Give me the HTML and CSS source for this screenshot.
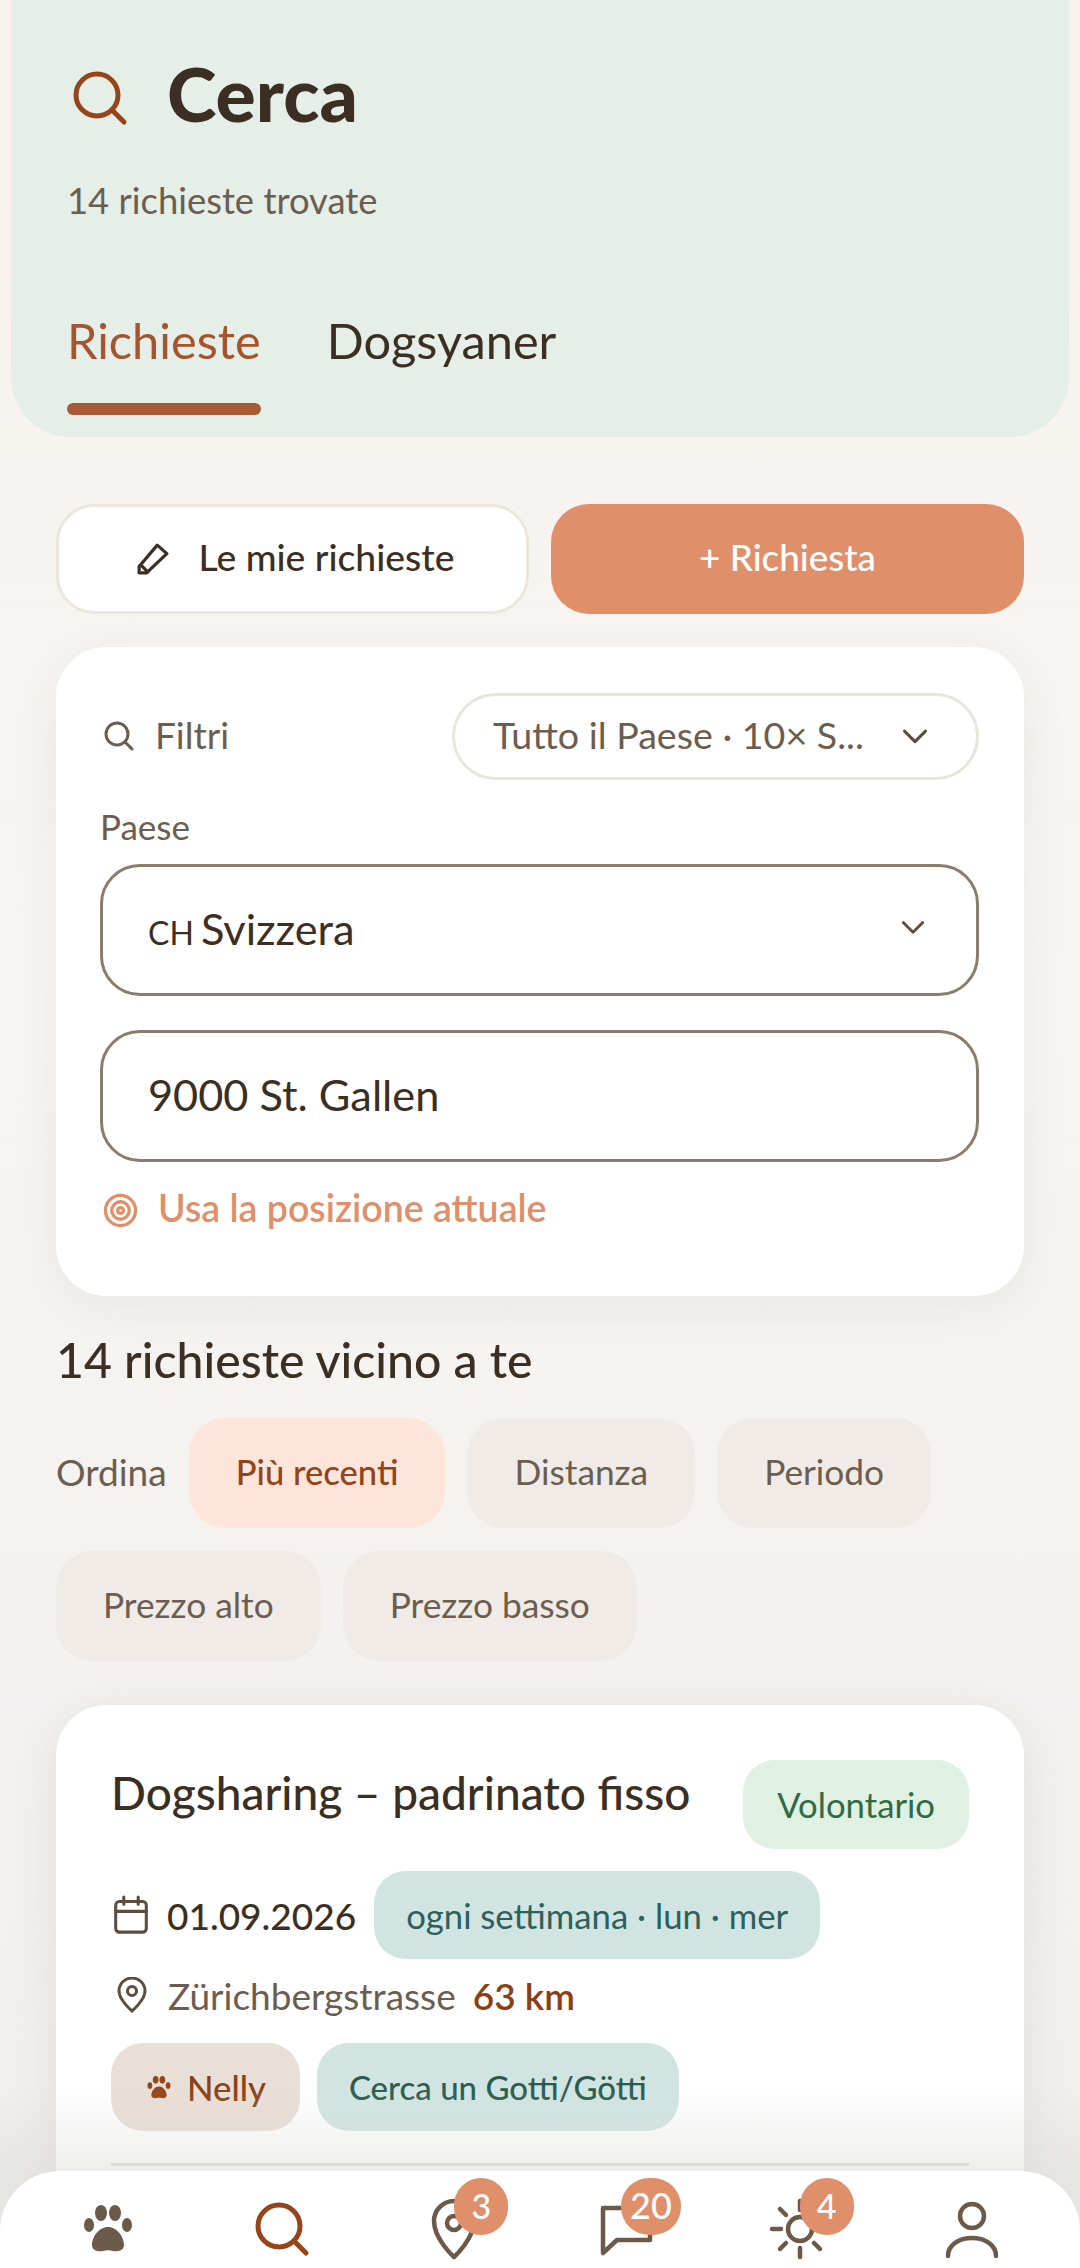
FILE: index.html
```html
<!DOCTYPE html>
<html lang="it">
<head>
<meta charset="utf-8">
<title>Cerca</title>
<link rel="stylesheet" href="styles.css">
</head>
<body>
<div class="page">
  <header class="hero">
    <div class="hero-title">
      <svg class="ic64 rust" viewBox="0 0 64 64"><circle cx="30" cy="29" r="21"/><path d="M45 44L57 56"/></svg>
      <h1>Cerca</h1>
    </div>
    <p class="hero-sub">14 richieste trovate</p>
    <div class="tabs">
      <div class="tab active">Richieste</div>
      <div class="tab">Dogsyaner</div>
    </div>
  </header>

  <main class="content">
    <div class="actions">
      <button class="btn btn-light">
        <svg class="ic-pencil" viewBox="0 0 30 30"><path d="M2 22L19 2L28 10L9 28H2Z"/><path d="M4 21L10 27"/></svg>
        Le mie richieste
      </button>
      <button class="btn btn-primary">+ Richiesta</button>
    </div>

    <section class="panel">
      <div class="filter-head">
        <div class="filter-label">
          <svg class="ic-filter" viewBox="0 0 32 32"><circle cx="14" cy="14" r="11"/><path d="M22 22l7 7"/></svg>
          Filtri
        </div>
        <div class="filter-pill">
          <span>Tutto il Paese · 10× S...</span>
          <svg class="chev" viewBox="0 0 24 24"><path d="M3 7l9 9 9-9"/></svg>
        </div>
      </div>
      <div class="field-label">Paese</div>
      <div class="field field-select">
        <span><span class="cc">CH</span> Svizzera</span>
        <svg class="chev chev-sm" viewBox="0 0 24 24"><path d="M3 7l9 9 9-9"/></svg>
      </div>
      <div class="field field-input">9000 St. Gallen</div>
      <div class="geo">
        <svg class="ic-target" viewBox="0 0 36 36"><circle cx="18" cy="18" r="15.5"/><circle cx="18" cy="18" r="9"/><circle cx="18" cy="18" r="3"/></svg>
        Usa la posizione attuale
      </div>
    </section>

    <h2 class="count">14 richieste vicino a te</h2>

    <div class="sort">
      <span class="sort-label">Ordina</span>
      <span class="chip chip-on">Più recenti</span>
      <span class="chip">Distanza</span>
      <span class="chip">Periodo</span>
      <span class="chip">Prezzo alto</span>
      <span class="chip">Prezzo basso</span>
    </div>

    <article class="card">
      <div class="card-top">
        <h3>Dogsharing – padrinato fisso</h3>
        <span class="tag tag-green">Volontario</span>
      </div>
      <div class="row-date">
        <svg class="ic-cal" viewBox="2 1 20 22"><rect x="3.5" y="4.5" width="17" height="17" rx="2"/><path d="M3.5 10h17M8 2v4M16 2v4"/></svg>
        <span class="date">01.09.2026</span>
        <span class="tag tag-teal">ogni settimana · lun · mer</span>
      </div>
      <div class="row-place">
        <svg class="ic-pin" viewBox="0 0 30 36"><path d="M15 34C15 34 2 23 2 14a13 13 0 0 1 26 0C28 23 15 34 15 34z"/><circle cx="15" cy="14" r="4.5"/></svg>
        <span>Zürichbergstrasse</span>
        <span class="km">63 km</span>
      </div>
      <div class="row-tags">
        <span class="tag tag-dog">
          <svg class="ic-minipaw" viewBox="0 0 50 48"><ellipse cx="6" cy="20" rx="5" ry="7"/><ellipse cx="18" cy="8" rx="6" ry="8"/><ellipse cx="32" cy="8" rx="6" ry="8"/><ellipse cx="44" cy="20" rx="5" ry="7"/><path d="M25 22C16 22 9 32 9 40C9 46 16 47 20 46C23 45 27 45 30 46C34 47 41 46 41 40C41 32 34 22 25 22Z"/></svg>
          Nelly
        </span>
        <span class="tag tag-teal tag-dark">Cerca un Gotti/Götti</span>
      </div>
      <div class="divider"></div>
    </article>
  </main>

  <div class="fade"></div>

  <nav class="tabbar">
    <a class="nav-item">
      <svg class="ic64 fill" viewBox="0 0 64 64"><g transform="translate(7 8)"><ellipse cx="6" cy="20" rx="5" ry="7"/><ellipse cx="18" cy="8" rx="6" ry="8"/><ellipse cx="32" cy="8" rx="6" ry="8"/><ellipse cx="44" cy="20" rx="5" ry="7"/><path d="M25 22C16 22 9 32 9 40C9 46 16 47 20 46C23 45 27 45 30 46C34 47 41 46 41 40C41 32 34 22 25 22Z"/></g></svg>
    </a>
    <a class="nav-item">
      <svg class="ic64 rust" viewBox="0 0 64 64"><circle cx="30" cy="29" r="21"/><path d="M45 44L57 56"/></svg>
    </a>
    <a class="nav-item">
      <svg class="ic64" viewBox="0 0 64 64"><path d="M32 60C32 60 12 42 12 24a20 20 0 0 1 40 0C52 42 32 60 32 60z"/><circle cx="32" cy="26" r="7"/></svg>
      <span class="badge badge-pin">3</span>
    </a>
    <a class="nav-item">
      <svg class="ic64" viewBox="0 0 64 64"><path d="M9 11H56V43H23L9 56Z"/></svg>
      <span class="badge badge-wide">20</span>
    </a>
    <a class="nav-item">
      <svg class="ic64" viewBox="0 0 64 64"><circle cx="33" cy="32" r="12"/><path d="M33 4v9M33 51v9M5 32h9M52 32h9M13 12l6 6M47 46l6 6M13 52l6-6M47 18l6-6"/></svg>
      <span class="badge badge-sun">4</span>
    </a>
    <a class="nav-item">
      <svg class="ic64" viewBox="0 0 64 64"><circle cx="32" cy="19" r="12"/><path d="M8 59C8 48 19 41 32 41S56 48 56 59"/></svg>
    </a>
  </nav>
</div>
</body>
</html>
```
FILE: styles.css
```css
* { box-sizing: border-box; }
html, body { margin: 0; padding: 0; }
body {
  font-family: "Lato", "Noto Sans", sans-serif;
  color: #3b2f24;
}
h1, h2, h3, p { margin: 0; font-weight: 400; }

.page {
  position: relative;
  width: 1080px;
  height: 2268px;
  overflow: hidden;
  background: linear-gradient(180deg, #f8f2ee 0%, #f6f5f2 45%, #f0efed 100%);
}

/* Hero */
.hero {
  margin: 0 11px;
  height: 437px;
  padding: 60px 0 0 56px;
  background: #e6eee8;
  border-radius: 0 0 60px 60px;
}
.hero-title { display: flex; align-items: center; gap: 36px; height: 76px; }
.hero-title h1 {
  font-size: 75px;
  line-height: 76px;
  font-weight: 900;
  padding-bottom: 10px;
  color: #3b2f24;
}
.hero-sub {
  margin-top: 42px;
  font-size: 36.4px;
  line-height: 44px;
  color: #6b5d4f;
}
.tabs { display: flex; gap: 66px; margin-top: 88px; }
.tab { font-size: 48.7px; line-height: 60px; color: #3b2f24; }
.tab.active { color: #a4552e; }
.tab.active::after {
  content: "";
  display: block;
  height: 12px;
  margin-top: 33px;
  border-radius: 6px;
  background: #a85a32;
}

.ic64 {
  width: 64px;
  height: 64px;
  flex: none;
  fill: none;
  stroke: #6b5a49;
  stroke-width: 4.5;
  stroke-linecap: round;
  stroke-linejoin: round;
}
.ic64.rust { stroke: #96441a; stroke-width: 5; }
.ic64.fill { fill: #6b5a49; stroke: none; }

/* Content */
.content { padding: 67px 56px 0; }
.actions { display: flex; gap: 22px; }
.btn {
  flex: 0 0 calc(50% - 11px);
  height: 110px;
  display: flex;
  align-items: center;
  justify-content: center;
  gap: 30px;
  border-radius: 38px;
  font: 500 36.8px/44px "Lato", sans-serif;
  padding: 0 0 4px;
}
.btn-light { background: #fff; border: 3px solid #ece6dc; color: #3b2f24; padding-left: 6px; font-size: 37.3px; }
.btn-primary { background: #e08f6b; border: 0; color: #fff; }
.ic-pencil { width: 32px; height: 32px; fill: none; stroke: #3b2f24; stroke-width: 3; stroke-linejoin: round; stroke-linecap: round; margin-top: 4px; }

.panel {
  margin-top: 33px;
  height: 649px;
  padding: 46px 45px 0 44px;
  background: #fff;
  border-radius: 50px;
  box-shadow: 0 12px 48px rgba(90, 70, 50, 0.07);
}
.filter-head { display: flex; justify-content: space-between; align-items: center; }
.filter-label { display: flex; align-items: center; gap: 20px; padding: 0 0 4px 3px; font-size: 37px; color: #6b5d4f; }
.ic-filter { width: 32px; height: 32px; fill: none; stroke: #6b5d4f; stroke-width: 3; stroke-linecap: round; margin-top: 3px; }
.filter-pill {
  width: 527px;
  height: 87px;
  padding: 0 47px 4px 38px;
  display: flex;
  align-items: center;
  justify-content: space-between;
  border: 3px solid #e8e6dc;
  border-radius: 44px;
  font-size: 37.6px;
  color: #6b5d4f;
}
.chev { width: 28px; height: 28px; fill: none; stroke: #5b4d3f; stroke-width: 2.6; stroke-linecap: round; stroke-linejoin: round; margin-top: 4px; }
.chev-sm { width: 26px; height: 26px; margin-top: 0; }
.field-label { margin-top: 26px; font-size: 35px; line-height: 40px; color: #6b5d4f; }
.field {
  height: 132px;
  padding: 0 50px 4px 45px;
  display: flex;
  align-items: center;
  justify-content: space-between;
  border: 3px solid #8b7d6b;
  border-radius: 40px;
  font-size: 43.3px;
  color: #3b2f24;
}
.field-select { margin-top: 18px; }
.field-input { margin-top: 34px; }
.cc { font-size: 32px; margin-right: -4px; }
.geo {
  margin-top: 24px;
  display: flex;
  align-items: center;
  gap: 20px;
  padding-left: 3px;
  font-size: 37.5px;
  line-height: 44px;
  font-weight: 600;
  color: #e08f6b;
}
.ic-target { width: 35px; height: 35px; fill: none; stroke: #e08f6b; stroke-width: 3.4; margin-top: 4px; }

.count { margin-top: 33px; padding: 0 0 1px 0; font-size: 48.2px; line-height: 60px; font-weight: 500; color: #3b2f24; }

.sort { margin-top: 28px; display: flex; flex-wrap: wrap; align-items: center; gap: 23px 22px; }
.sort-label { font-size: 37px; color: #6b5d4f; padding-bottom: 4px; }
.chip {
  height: 110px;
  padding: 0 47px 3px;
  display: flex;
  align-items: center;
  background: #f0ebe6;
  border-radius: 36px;
  font-size: 35.3px;
  color: #6b5d4f;
}
.chip-on { background: #fee5da; color: #93441a; font-weight: 500; font-size: 34.6px; }

/* Card */
.card {
  margin-top: 44px;
  height: 600px;
  padding: 55px 55px 0;
  background: #fff;
  border-radius: 50px;
  box-shadow: 0 10px 48px rgba(90, 70, 50, 0.1);
}
.card-top { display: flex; justify-content: space-between; align-items: flex-start; }
.card-top h3 { margin-top: 2px; font-size: 46px; line-height: 62px; font-weight: 500; color: #3b2f24; }
.tag {
  height: 88px;
  padding: 0 32px;
  display: inline-flex;
  align-items: center;
  border-radius: 32px;
  font-size: 34.7px;
  flex: none;
}
.tag-green { height: 89px; padding: 0 34px; background: #e0f0e3; color: #2f6b44; }
.tag-teal { background: #d0e5e2; color: #2c6059; }
.tag-dark { padding: 0 32px; font-size: 33px; color: #2c5a50; font-weight: 500; }
.tag-dog { background: #e8dfd7; color: #8a3f14; gap: 16px; padding: 0 34px 0 36px; font-weight: 500; }
.ic-minipaw { width: 24px; height: 23px; fill: #96441a; }

.row-date { margin-top: 22px; display: flex; align-items: center; }
.ic-cal { width: 36px; height: 40px; margin-left: 2px; margin-right: 18px; fill: none; stroke: #5b4d3f; stroke-width: 1.7; stroke-linecap: round; }
.date { font-size: 37px; font-weight: 500; color: #3b2f24; margin-right: 18px; }
.row-place { margin-top: 12px; height: 48px; display: flex; align-items: center; font-size: 37px; color: #6b5d4f; }
.ic-pin { width: 30px; height: 36px; margin: 0 21px 0 6px; fill: none; stroke: #5b4d3f; stroke-width: 3; }
.km { margin-left: 17px; font-weight: 600; color: #8a3f14; }
.row-tags { margin-top: 24px; display: flex; gap: 17px; }
.divider { margin-top: 32px; height: 3px; background: #dedcd8; }

/* Bottom bar */
.fade {
  position: absolute;
  left: 0;
  right: 0;
  bottom: 0;
  height: 183px;
  background: linear-gradient(180deg, rgba(215, 215, 212, 0) 0%, rgba(215, 215, 212, 0.42) 47%);
}
.tabbar {
  position: absolute;
  left: 0;
  right: 0;
  bottom: 0;
  height: 97px;
  padding: 26px 22px 0;
  display: grid;
  grid-template-columns: repeat(6, 1fr);
  background: #fff;
  border-radius: 60px 60px 0 0;
}
.nav-item { position: relative; display: flex; justify-content: center; align-items: flex-start; }
.badge {
  position: absolute;
  top: -19px;
  left: 87px;
  width: 54px;
  height: 57px;
  padding-bottom: 3px;
  display: flex;
  align-items: center;
  justify-content: center;
  border-radius: 28px;
  background: #e08f6b;
  color: #fff;
  font-size: 34px;
  font-weight: 500;
}
.badge-wide { left: 81px; width: 60px; font-size: 36px; }
.badge-sun { left: 87px; }
```
